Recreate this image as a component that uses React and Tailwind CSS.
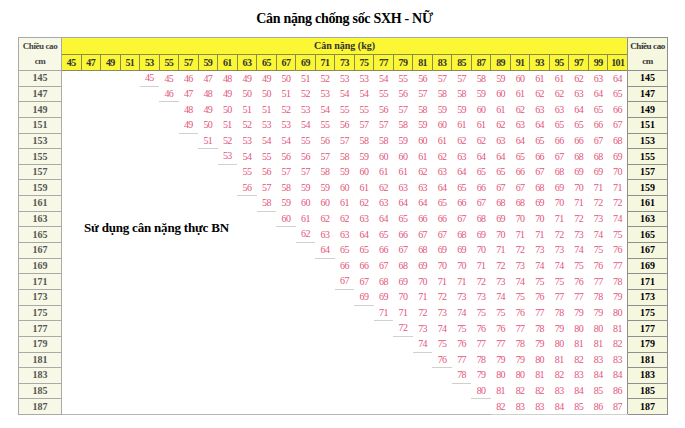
import React from 'react';

// weights 45..101, heights 145..187
const weights = Array.from({ length: 29 }, (_, i) => 45 + i * 2);

// [height, first column index, values]
const rows = [
  [145, 4, '45 45 46 47 48 49 49 50 51 52 53 53 54 55 56 57 57 58 59 60 61 61 62 63 64'],
  [147, 5, '46 47 48 49 50 50 51 52 53 54 54 55 56 57 58 58 59 60 61 62 62 63 64 65'],
  [149, 6, '48 49 50 51 51 52 53 54 55 55 56 57 58 59 59 60 61 62 63 63 64 65 66'],
  [151, 6, '49 50 51 52 53 53 54 55 56 57 57 58 59 60 61 61 62 63 64 65 65 66 67'],
  [153, 7, '51 52 53 54 54 55 56 57 58 58 59 60 61 62 62 63 64 65 66 66 67 68'],
  [155, 8, '53 54 55 56 56 57 58 59 60 60 61 62 63 64 64 65 66 67 68 68 69'],
  [157, 9, '55 56 57 57 58 59 60 61 61 62 63 64 65 65 66 67 68 69 69 70'],
  [159, 9, '56 57 58 59 59 60 61 62 63 63 64 65 66 67 67 68 69 70 71 71'],
  [161, 10, '58 59 60 60 61 62 63 64 64 65 66 67 68 68 69 70 71 72 72'],
  [163, 11, '60 61 62 62 63 64 65 66 66 67 68 69 70 70 71 72 73 74'],
  [165, 12, '62 63 63 64 65 66 67 67 68 69 70 71 71 72 73 74 75'],
  [167, 13, '64 65 65 66 67 68 69 69 70 71 72 73 73 74 75 76'],
  [169, 14, '66 66 67 68 69 70 70 71 72 73 74 74 75 76 77'],
  [171, 14, '67 67 68 69 70 71 71 72 73 74 75 75 76 77 78'],
  [173, 15, '69 69 70 71 72 73 73 74 75 76 77 77 78 79'],
  [175, 16, '71 71 72 73 74 75 75 76 77 78 79 79 80'],
  [177, 17, '72 73 74 75 76 76 77 78 79 80 80 81'],
  [179, 18, '74 75 76 77 77 78 79 80 81 81 82'],
  [181, 19, '76 77 78 79 79 80 81 82 83 83'],
  [183, 20, '78 79 80 80 81 82 83 84 84'],
  [185, 21, '80 81 82 82 83 84 85 86'],
  [187, 22, '82 83 83 84 85 86 87'],
];

const NOTE_ROW = 9; // row 163, note spans into row 165

function DataRow({ r }) {
  const [h, start, vals] = rows[r];
  const list = vals.split(' ');
  const nextStart = r + 1 < rows.length ? rows[r + 1][1] : 29;
  const cells = [];

  if (r === NOTE_ROW) {
    cells.push(
      <td key="note" colSpan={11} rowSpan={2} className="p-0 align-middle pl-[22px]">
        <span className="text-[13px] font-bold text-black whitespace-nowrap tracking-[-0.2px]">Sử dụng cân nặng thực BN</span>
      </td>
    );
  }

  for (let c = 0; c < 29; c++) {
    if (r === NOTE_ROW && c < 11) continue;
    if (r === NOTE_ROW + 1 && c < 11) continue;
    const v = c >= start ? list[c - start] : null;
    const stair = c >= start && c < nextStart;
    cells.push(
      <td
        key={c}
        className={`p-0 text-center text-[10px] leading-none tracking-[-0.6px] text-[#e4547a] ${stair ? 'border-b border-[#d0d0d0]' : ''}`}
      >
        {v}
      </td>
    );
  }

  return (
    <tr className="h-[15.65px]">
      <td className="p-0 bg-[#f8f8e6] border border-[#a9a9a9] text-center text-[10px] font-bold leading-none text-[#555]">{h}</td>
      {cells}
      <td className="p-0 bg-[#f6f7df] border border-[#8f8f8f] text-center text-[10px] font-bold leading-none text-black">{h}</td>
    </tr>
  );
}

export default function App() {
  return (
    <div className="w-[685px] h-[428px] bg-white pt-[9px] pl-[18px]" style={{ fontFamily: '"Liberation Serif", "Times New Roman", serif' }}>
      <div className="w-[649px] text-center text-[14px] font-bold text-black leading-[20px] h-[28px] pl-[4px] tracking-[-0.3px]">
        Cân nặng chống sốc SXH - NỮ
      </div>
      <table className="table-fixed border-collapse w-[649px] border-l border-b border-[#b5b5b5]">
        <colgroup>
          <col className="w-[43px]" />
          {weights.map(w => <col key={w} className="w-[19.52px]" />)}
          <col className="w-[40px]" />
        </colgroup>
        <thead>
          <tr className="h-[17px]">
            <td rowSpan={2} className="p-0 bg-[#f8f8e6] border border-[#a9a9a9] text-center text-[9px] font-bold leading-[15px] text-[#444] whitespace-nowrap tracking-[-0.4px]">
              Chiều cao<br />cm
            </td>
            <td colSpan={29} className="p-0 bg-[#fbf735] border-t border-[#a9a9a9] text-center text-[10px] font-bold leading-none text-[#333]">
              Cân nặng (kg)
            </td>
            <td rowSpan={2} className="p-0 bg-[#f6f7df] border border-[#8f8f8f] text-center text-[9px] font-bold leading-[15px] text-[#333] whitespace-nowrap tracking-[-0.4px]">
              Chiều cao<br />cm
            </td>
          </tr>
          <tr className="h-[16px]">
            {weights.map(w => (
              <td key={w} className="p-0 bg-[#fbf735] border border-[#8a8a55] text-center text-[10px] font-bold leading-none text-[#333] tracking-[-0.6px]">
                {w}
              </td>
            ))}
          </tr>
        </thead>
        <tbody>
          {rows.map((_, r) => <DataRow key={r} r={r} />)}
        </tbody>
      </table>
    </div>
  );
}
